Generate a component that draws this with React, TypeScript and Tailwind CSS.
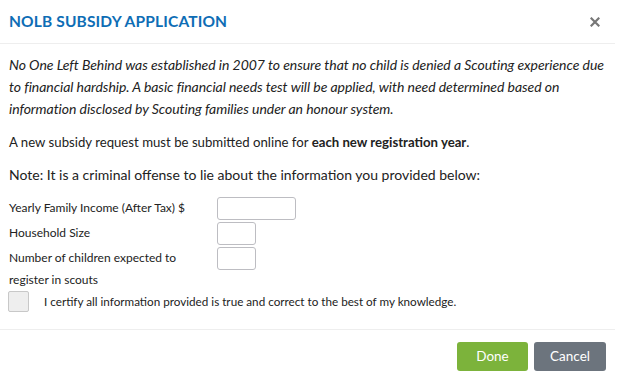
import { useState } from "react";

const fields = [
  { label: "Yearly Family Income (After Tax) $", width: "w-[79px]" },
  { label: "Household Size", width: "w-[39px]" },
  { label: "Number of children expected to register in scouts", width: "w-[39px]" },
];

export default function App() {
  const [certified, setCertified] = useState(false);

  return (
    <div className="min-h-screen bg-white font-['Lato','Open_Sans',sans-serif] text-[#222]">
      <div className="w-[615px]">
        <header className="flex h-[44px] items-center justify-between border-b border-[#eeeeee] pl-[9px] pr-[15px]">
          <h1 className="text-[15.5px] font-bold tracking-[0.01em] text-[#0e6db5]">
            NOLB SUBSIDY APPLICATION
          </h1>
          <button className="text-[#777]">
            <svg width="10" height="10" viewBox="0 0 10 10" fill="none" stroke="currentColor" strokeWidth="2.2" strokeLinecap="square">
              <path d="M1.5 1.5l7 7M8.5 1.5l-7 7" />
            </svg>
          </button>
        </header>

        <section className="px-[9px] pt-[10px] pb-[17px]">
          <p className="text-[14px] italic leading-[22px] tracking-[-0.05px]">
            No One Left Behind was established in 2007 to ensure that no child is denied a
            Scouting experience due to financial hardship. A basic financial needs test will
            be applied, with need determined based on information disclosed by Scouting
            families under an honour system.
          </p>

          <p className="mt-[11px] text-[13.2px] leading-[22px]">
            A new subsidy request must be submitted online for{" "}
            <span className="font-bold">each new registration year</span>.
          </p>

          <p className="mt-[11px] text-[14px] leading-[22px]">
            Note: It is a criminal offense to lie about the information you provided below:
          </p>

          <div className="mt-[11px] flex flex-col gap-[2px]">
            {fields.map((field) => (
              <div key={field.label} className="flex items-start">
                <label className="w-[208px] pr-[20px] text-[12px] leading-[22px]">
                  {field.label}
                </label>
                <input
                  className={`h-[23px] ${field.width} rounded-[3px] border border-[#bdbdc2] bg-white`}
                />
              </div>
            ))}
          </div>

          <label className="-ml-[1px] flex items-center gap-[15px]">
            <input
              type="checkbox"
              checked={certified}
              onChange={(e) => setCertified(e.target.checked)}
              className="h-[21px] w-[21px] appearance-none rounded-[2px] border border-[#c8c8c8] bg-[#eeeeee]"
            />
            <span className="text-[11.7px]">
              I certify all information provided is true and correct to the best of my knowledge.
            </span>
          </label>
        </section>

        <footer className="flex justify-end gap-[6px] border-t border-[#eeeeee] pt-[12px] pr-[9px]">
          <button className="h-[29px] w-[71px] rounded-[3px] bg-[#7cb33b] text-[13.5px] text-white">
            Done
          </button>
          <button className="h-[29px] w-[72px] rounded-[3px] bg-[#6c747d] text-[13.5px] text-white">
            Cancel
          </button>
        </footer>
      </div>
    </div>
  );
}
